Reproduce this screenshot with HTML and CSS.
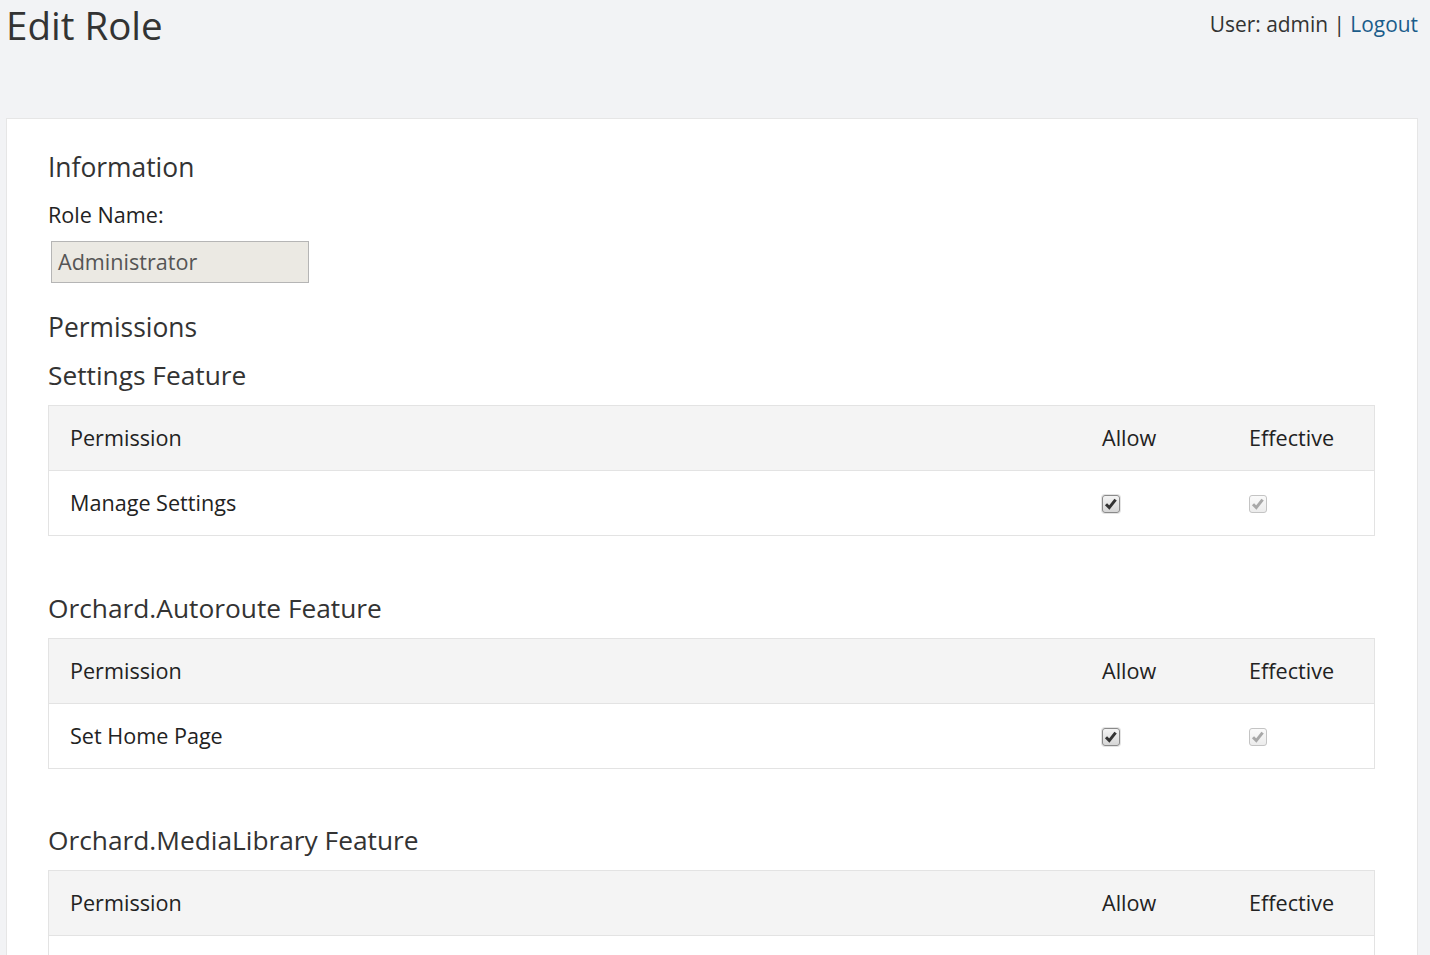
FILE: index.html
```html
<!DOCTYPE html>
<html>
<head>
<meta charset="utf-8">
<link rel="stylesheet" href="styles.css">
</head>
<body>
<header class="top">
  <h1 class="title">Edit Role</h1>
  <div class="user">User: admin <span class="sep">|</span> <a href="#" class="logout">Logout</a></div>
</header>
<main class="card">
  <h2 class="section">Information</h2>
  <label class="label">Role Name:</label>
  <div class="input">Administrator</div>
  <h2 class="section perms">Permissions</h2>

  <h2 class="feature">Settings Feature</h2>
  <table class="ptable">
    <thead><tr><th>Permission</th><th class="c">Allow</th><th class="c">Effective</th></tr></thead>
    <tbody><tr><td>Manage Settings</td>
      <td class="c"><span class="cb"><svg width="18" height="18" viewBox="0 0 18 18"><path d="M4 9.3 L7.3 12.6 L13.6 4.6" fill="none" stroke="#333" stroke-width="3"/></svg></span></td>
      <td class="c"><span class="cb dis"><svg width="18" height="18" viewBox="0 0 18 18"><path d="M4 9.3 L7.3 12.6 L13.6 4.6" fill="none" stroke="#a8a8a8" stroke-width="3"/></svg></span></td></tr></tbody>
  </table>

  <h2 class="feature">Orchard.Autoroute Feature</h2>
  <table class="ptable">
    <thead><tr><th>Permission</th><th class="c">Allow</th><th class="c">Effective</th></tr></thead>
    <tbody><tr><td>Set Home Page</td>
      <td class="c"><span class="cb"><svg width="18" height="18" viewBox="0 0 18 18"><path d="M4 9.3 L7.3 12.6 L13.6 4.6" fill="none" stroke="#333" stroke-width="3"/></svg></span></td>
      <td class="c"><span class="cb dis"><svg width="18" height="18" viewBox="0 0 18 18"><path d="M4 9.3 L7.3 12.6 L13.6 4.6" fill="none" stroke="#a8a8a8" stroke-width="3"/></svg></span></td></tr></tbody>
  </table>

  <h2 class="feature">Orchard.MediaLibrary Feature</h2>
  <table class="ptable">
    <thead><tr><th>Permission</th><th class="c">Allow</th><th class="c">Effective</th></tr></thead>
    <tbody><tr><td>Manage Media</td>
      <td class="c"><span class="cb"><svg width="18" height="18" viewBox="0 0 18 18"><path d="M4 9.3 L7.3 12.6 L13.6 4.6" fill="none" stroke="#333" stroke-width="3"/></svg></span></td>
      <td class="c"><span class="cb dis"><svg width="18" height="18" viewBox="0 0 18 18"><path d="M4 9.3 L7.3 12.6 L13.6 4.6" fill="none" stroke="#a8a8a8" stroke-width="3"/></svg></span></td></tr></tbody>
  </table>
</main>
</body>
</html>
```
FILE: styles.css
```css
html, body {
  margin: 0;
  padding: 0;
  background: #f2f3f5;
  font-family: "Open Sans", "Noto Sans", sans-serif;
  color: #222;
  font-size: 21.6px;
}
.top {
  display: flex;
  justify-content: space-between;
  align-items: flex-start;
  padding: 0 12px 0 6px;
  height: 118px;
}
.title {
  margin: 0;
  font-weight: 400;
  font-size: 38.5px;
  line-height: 50px;
  color: #333;
}
.user {
  font-size: 20.9px;
  line-height: 30px;
  margin-top: 9px;
  color: #333;
}
.logout { color: #1a5c8a; text-decoration: none; }
.sep { color: #333; }
.card {
  margin: 0 12px 0 6px;
  background: #fff;
  border: 1px solid #e6e6e6;
  padding: 30px 42px 0 41px;
}
.section {
  margin: 0;
  font-weight: 400;
  font-size: 26.4px;
  line-height: 36px;
  color: #333;
}
.label {
  display: block;
  margin-top: 15px;
  line-height: 30px;
  color: #222;
}
.input {
  margin: 11px 0 0 3px;
  width: 250px;
  height: 40px;
  padding: 0 0 0 6px;
  background: #ebe9e3;
  border: 1px solid #b5b5b5;
  color: #555;
  line-height: 40px;
}
.perms { margin-top: 26px; }
.feature {
  margin: 12px 0 12px;
  font-weight: 400;
  font-size: 26.3px;
  line-height: 36px;
  color: #333;
}
.ptable + .feature { margin-top: 53.5px; }
.ptable {
  width: 100%;
  border-collapse: collapse;
  border: 1px solid #e3e3e3;
}
.ptable th, .ptable td {
  text-align: left;
  font-weight: 400;
  padding: 17px 21px;
  line-height: 30px;
  color: #222;
}
.ptable thead tr { background: #f4f4f4; }
.ptable tbody td { border-top: 1px solid #e3e3e3; }
.ptable .c { width: 104px; padding-left: 22px; }
.cb {
  display: inline-block;
  width: 16px;
  height: 16px;
  border: 1px solid #8a8a8a;
  border-radius: 3px;
  background: linear-gradient(#f4f4f4, #d6d6d6);
  vertical-align: -2px;
  position: relative;
  box-shadow: 0 0 0 1px #e4e4e4;
}
.cb svg { position: absolute; left: -1px; top: -1px; }
.cb.dis { border-color: #c4c4c4; background: linear-gradient(#fafafa, #ececec); box-shadow: none; }
```
